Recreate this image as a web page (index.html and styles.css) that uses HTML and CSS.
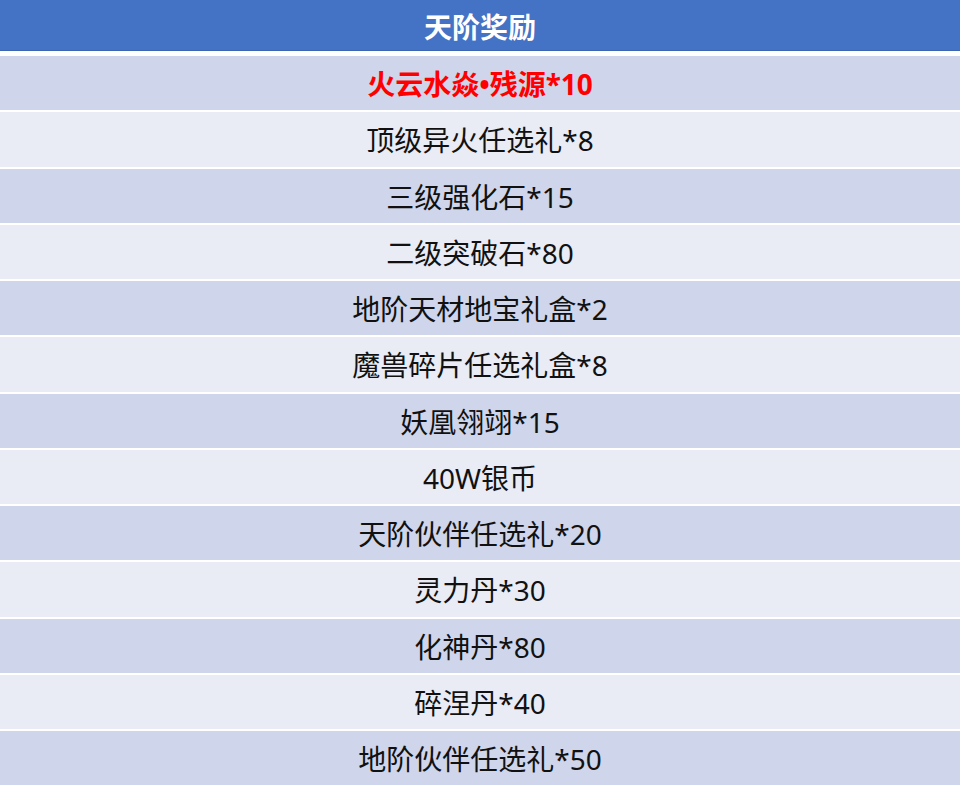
FILE: index.html
```html
<!DOCTYPE html>
<html lang="zh-CN">
<head>
<meta charset="utf-8">
<title>天阶奖励</title>
<link rel="stylesheet" href="styles.css">
</head>
<body>
<div class="table">
  <div class="head">天阶奖励</div>
  <div class="row dark hot">火云水焱•残源*10</div>
  <div class="row light">顶级异火任选礼*8</div>
  <div class="row dark">三级强化石*15</div>
  <div class="row light">二级突破石*80</div>
  <div class="row dark">地阶天材地宝礼盒*2</div>
  <div class="row light">魔兽碎片任选礼盒*8</div>
  <div class="row dark">妖凰翎翊*15</div>
  <div class="row light">40W银币</div>
  <div class="row dark">天阶伙伴任选礼*20</div>
  <div class="row light">灵力丹*30</div>
  <div class="row dark">化神丹*80</div>
  <div class="row light">碎涅丹*40</div>
  <div class="row dark">地阶伙伴任选礼*50</div>
</div>
</body>
</html>
```
FILE: styles.css
```css
html, body {
  margin: 0;
  padding: 0;
  background: #ffffff;
}
body {
  width: 960px;
  height: 786px;
  overflow: hidden;
  font-family: "Noto Sans", "Noto Sans CJK SC", sans-serif;
}
.table {
  display: flex;
  flex-direction: column;
}
.head {
  height: 51px;
  background: #4472c4;
  color: #ffffff;
  font-weight: bold;
  font-size: 28px;
  display: flex;
  align-items: center;
  justify-content: center;
  border-bottom: 5px solid #ffffff;
  box-shadow: inset 0 -1px 0 #3c66b3;
}
.row {
  height: 54.25px;
  display: flex;
  align-items: center;
  justify-content: center;
  font-size: 28px;
  color: #111111;
  border-bottom: 2px solid #ffffff;
}
.dark { background: #cfd5ea; }
.light { background: #e9ebf5; }
.hot {
  color: #ff0000;
  font-weight: bold;
}
```
